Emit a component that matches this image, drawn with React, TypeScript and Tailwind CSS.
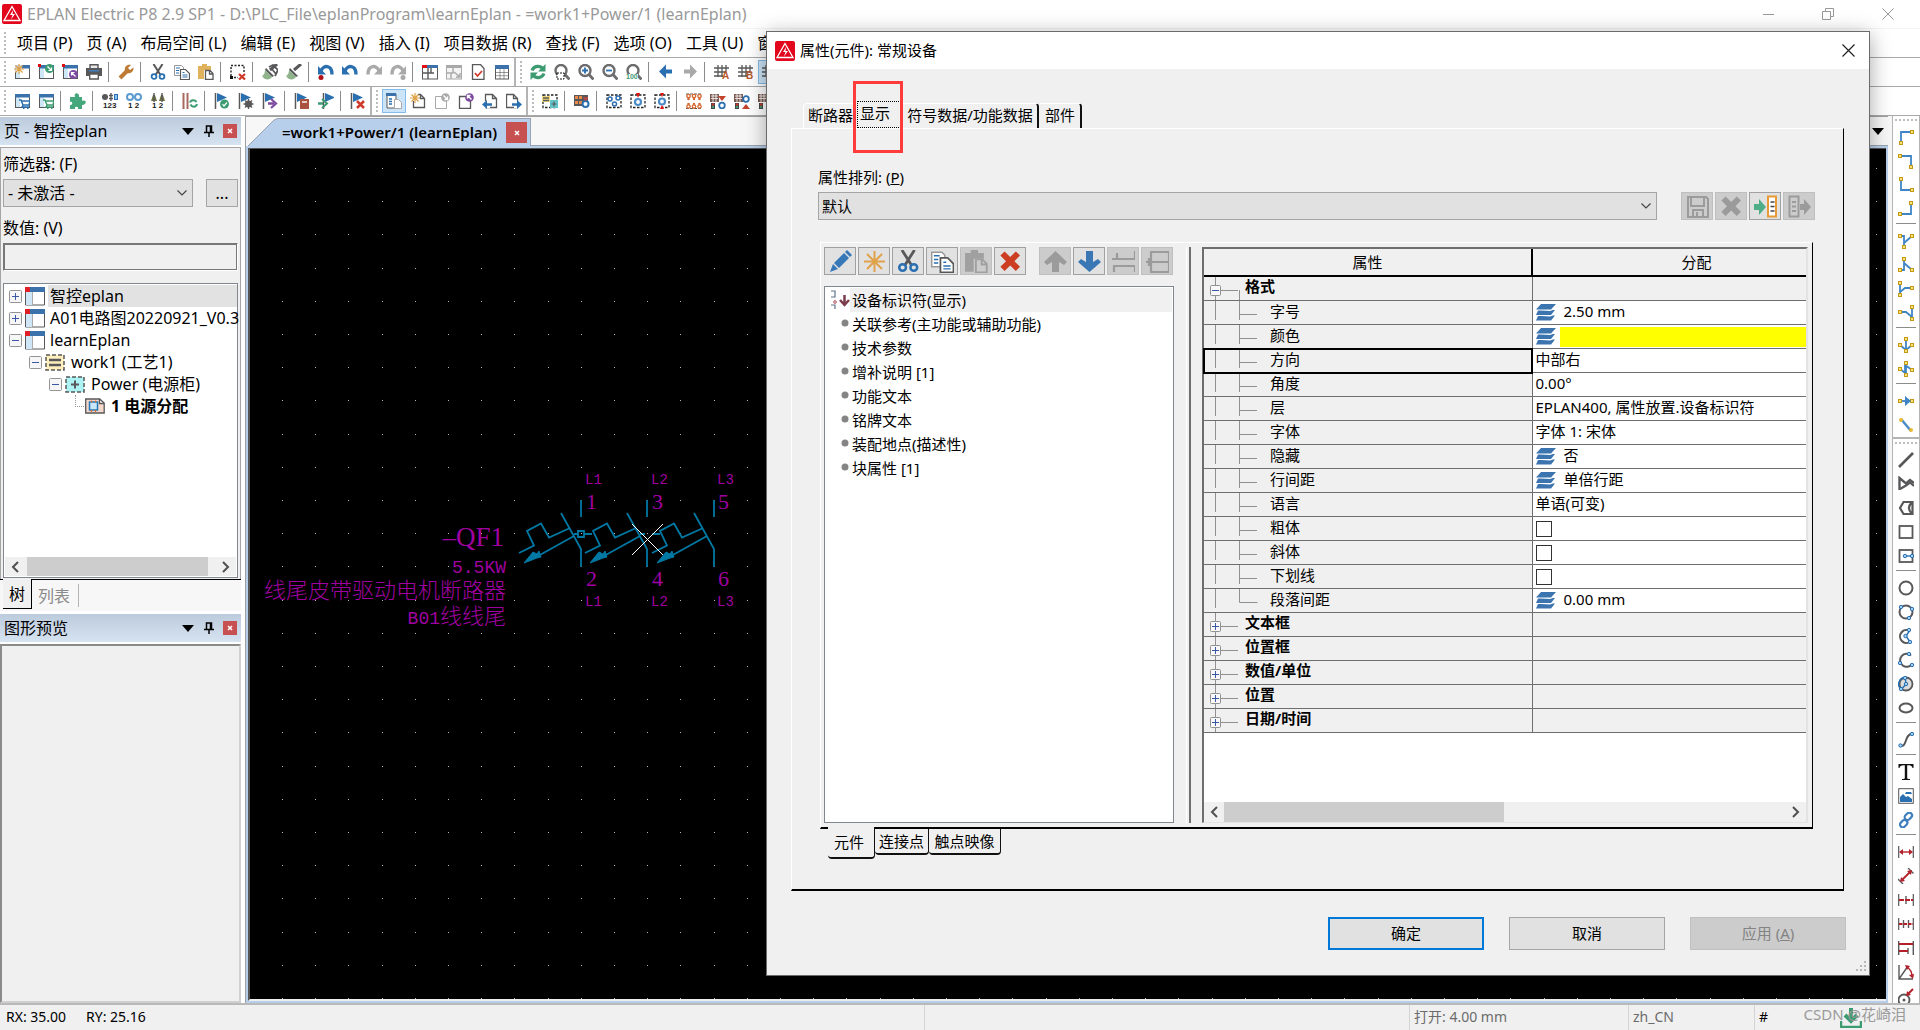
import type { ReactNode } from "react";

const BLUE = "#2a6fb0";
const DARK = "#58585a";
const GREEN = "#3d9b72";
const RED = "#d03a2b";
const PURPLE = "#7c4a9e";
const LITE = "#a9a9a9";

type LineProps = { d: string; c?: string; w?: number; dash?: string };
const L = ({ d, c = DARK, w = 1.4, dash }: LineProps) => (
  <path d={d} fill="none" stroke={c} strokeWidth={w} strokeDasharray={dash} />
);
const F = ({ d, c = DARK }: { d: string; c?: string }) => <path d={d} fill={c} />;
const C = ({ x, y, r, f = "none", s = "none", w = 1.5 }: { x: number; y: number; r: number; f?: string; s?: string; w?: number }) => (
  <circle cx={x} cy={y} r={r} fill={f} stroke={s} strokeWidth={w} />
);
const T = ({ x, y, c, s, children }: { x: number; y: number; c: string; s: number; children: string }) => (
  <text x={x} y={y} fill={c} fontSize={s} fontWeight="700" fontFamily="Liberation Sans, sans-serif">
    {children}
  </text>
);

const win = (
  <>
    <rect x="1.5" y="1.5" width="14" height="13" fill="#fff" stroke={DARK} />
    <path d="M2 4h4v10H2z" fill="#cfe6f7" />
    <path d="M1 1h15v3.5H1z" fill="#3b72ac" />
  </>
);
const redDot = <path d="M0 0h3v3H0z" fill="#e01010" />;
const star = (
  <path d="M5 0v10M0 5h10M1.5 1.5l7 7M8.5 1.5l-7 7" stroke="#dfa044" strokeWidth="1.2" fill="none" />
);
const sheet = <path d="M3.500 1.500h7l4 4v9h-11z M10.500 1.500v4h4" fill="#fff" stroke={DARK} strokeWidth="1.300" />;
const cart = (c: string) => (
  <path d="M5 7h2l2 5h6l1-4H8M9 12l-1 2h7M9 15.500h1.500M13 15.500h1.500" fill="none" stroke={c} strokeWidth="1.500" />
);
const flag = (
  <>
    <path d="M1.500 0v16" stroke={DARK} strokeWidth="1.500" />
    <path d="M3 0l10 4.500L3 9z" fill={BLUE} />
  </>
);
const undo = (c: string) => (
  <>
    <path d="M3 7C5 1 14 0 14 10.500" fill="none" stroke={c} strokeWidth="3.400" />
    <path d="M0 2v8.500h8z" fill={c} />
  </>
);
const redo = (c: string) => <g transform="translate(16 0) scale(-1 1)">{undo(c)}</g>;
const lens = (
  <>
    <circle cx="7" cy="6.500" r="5.500" fill="none" stroke="#6c6c6e" strokeWidth="2.400" />
    <path d="M10.500 10l5 5.500" stroke="#6c6c6e" strokeWidth="2.800" />
  </>
);
const grid = <path d="M4 1v12M8 1v12M12 1v8M0 4h15M0 8h12M0 12h9" stroke={DARK} strokeWidth="1.300" fill="none" />;
const dashBox = <rect x="1" y="2" width="14" height="12.500" fill="none" stroke="#222" strokeWidth="1.300" strokeDasharray="2.500 1.500" />;
const brush = (
  <>
    <path d="M15 0L8 6" stroke={DARK} strokeWidth="3" />
    <path d="M4 4l8 8-2 1-7-7z" fill={DARK} />
    <path d="M3 6l7 7c-2 3-7 4-10-1 2-1 3-3 3-6z" fill="#8fb48c" />
  </>
);
const copyArt = (
  <>
    <path d="M.500 1.500h7l2 2v8h-9z" fill="#fff" stroke="#999" />
    <path d="M6.500 5.500h5l4 4v6h-9z" fill="#fff" stroke={DARK} strokeWidth="1.200" />
    <path d="M2 4h4M2 6.500h3M2 9h3M8.500 8.500h2M8.500 11h5M8.500 13h5" stroke={BLUE} />
  </>
);
const cutArt = (
  <>
    <path d="M3.500 0L10.500 11M12.500 0L5.500 11" stroke={DARK} strokeWidth="2" />
    <circle cx="4" cy="12.500" r="2.400" fill="none" stroke={BLUE} strokeWidth="1.800" />
    <circle cx="12" cy="12.500" r="2.400" fill="none" stroke={BLUE} strokeWidth="1.800" />
  </>
);
const pasteArt = (a: string, b: string, paper: string) => (
  <>
    <path d="M0 2h4V0h5v2h4v4H6v9H0z" fill={a} />
    <path d="M7.500 6.500h4.500l3 3v6h-7.500z M11.500 6.500v3.500h3.500" fill={paper} stroke={b} strokeWidth="1.300" />
  </>
);
const crossArt = (c: string) => (
  <path d="M1 4l3-3 4 4 4-4 3 3-4 4 4 4-3 3-4-4-4 4-3-3 4-4z" fill={c} />
);
const multi = (
  <>
    <path d="M0 1h9v8H0z" fill="#7a5a50" />
    <path d="M1 3h7M1 5.500h7M3 1v8M6 1v8" stroke="#fff" strokeWidth=".8" />
    <path d="M1 10h4v6H1z" fill="#444" />
    <C x={3} y={14} r={1.2} f={GREEN} />
    <C x={3} y={11.500} r={1.200} f={RED} />
  </>
);

const art: Record<string, ReactNode> = {
  newProject: <>{win}<rect width="8" height="8" fill="#fff" opacity=".7" /><g>{star}</g></>,
  openProject: <>{win}{redDot}<C x={11.5} y={4.5} r={4.5} f={GREEN} /><L d="M9.500 2.500l4 4M13.500 3.500v3h-3" c="#fff" w={1.2} /></>,
  closeProject: <>{win}{redDot}<C x={11.5} y={10.5} r={4.5} f={PURPLE} /><L d="M13.500 12.500l-4-4M9.500 11.500v-3h3" c="#fff" w={1.2} /></>,
  print: <><F d="M4 0h8v4H4z" c="#e8e8e8" /><L d="M4 4V.700h8V4" /><F d="M0 4h16v8h-3v-2H3v2H0z" /><F d="M3 6h10v1.500H3z" c="#3f7fbf" /><L d="M3.700 10h8.600v5H3.700z" /></>,
  wrench: <><L d="M2 14l7-7" c="#bd7a35" w={4} /><F d="M7 7c-1-4 2-7 6-6l-3 3 2 2 3.500-2.500C16 8 12 10 8 9z" c="#bd7a35" /></>,
  cut: cutArt,
  copy: copyArt,
  paste: pasteArt("#e0b25c", DARK, "#fff"),
  clear: <><L d="M1 12V1.500h13V9" c="#222" dash="2 1.500" /><F d="M0 12h3v3H0z" c="#111" /><L d="M4 13.500h4" c="#222" dash="2 1.500" /><L d="M9 10l6 5.500M15 10l-6 5.500" c={RED} w={2.2} /></>,
  brush: <>{brush}<L d="M7 3l4-2 5 5-3 6M9 4l5 6" w={1.8} /></>,
  brush2: brush,
  undoMark: <>{undo(BLUE)}<C x={3} y={13.5} r={2.5} f="#b01116" /></>,
  undo: undo(BLUE),
  redo: redo(LITE),
  redoMark: <>{redo(LITE)}<C x={13} y={13.5} r={2.5} f={LITE} /></>,
  windowNav: <><rect x=".5" y="2" width="15" height="13" fill="#fff" stroke={DARK} /><F d="M0 1h5v3H0z" c="#e01010" /><F d="M5 1h11v3H5z" c="#3b72ac" /><L d="M6 4v11M1 9h8V4M9 9h3" /></>,
  windowGray: <><rect x=".5" y="2" width="15" height="13" fill="#f4f4f4" stroke={LITE} /><F d="M0 1h16v3H0z" c={LITE} /><L d="M1 9h6V4M8 8l6 5M14 9v4h-4M5 9v6" c={LITE} /></>,
  sheetCheck: <><path d="M2.500.500h8l3.500 4v11H2.500z" fill="#fff" stroke={DARK} strokeWidth="1.300" /><L d="M5 9l2.500 3L12 7" c={RED} w={1.8} /></>,
  tableIcon: <><rect x="1.500" y="1.500" width="13" height="13.500" fill="#fff" stroke={DARK} /><F d="M1 1h14v4H1z" c="#3b72ac" /><L d="M2 8.500h12M2 11.700h12M6 5v10M10 5v10" w={0.6} /></>,
  refresh: <><L d="M2 6.500C4 1.500 10 1 13 5M14 9.500C12 14.500 6 15 3 11" c={GREEN} w={3.2} /><F d="M15.500 0v7.500H8zM.500 16V8.500H8z" c={GREEN} /></>,
  zoomArea: <>{lens}<rect x="3" y="9" width="7" height="6" fill="#fff" stroke="#111" strokeDasharray="2 1" /></>,
  zoomIn: <>{lens}<L d="M7 3.500v6M4 6.500h6" c={BLUE} w={1.8} /></>,
  zoomOut: <>{lens}<L d="M4 6.500h6" c={BLUE} w={1.8} /></>,
  zoomAll: <>{lens}<rect y="10" width="12" height="6" fill="#fff" /><T x={0} y={15} c={GREEN} s={7}>100</T></>,
  back: <><F d="M1 7.500L8 .500v14z" c={BLUE} /><L d="M6 7.500h8" c={BLUE} w={4} /></>,
  forward: <><F d="M15 7.500L8 .500v14z" c={LITE} /><L d="M2 7.500h8" c={LITE} w={4} /></>,
  gridA: <>{grid}<T x={8} y={15} c="#b8562b" s={10}>A</T></>,
  gridB: <>{grid}<T x={8} y={15} c="#b8562b" s={10}>B</T></>,
  gridC: grid,
  cartBlue: <>{win}{cart(BLUE)}</>,
  cartGreen: <>{win}{cart(GREEN)}</>,
  puzzle: <F d="M0 4h5c-2-5 5-5 4 0h3v4c5-2 5 4 0 4v4H8c1-3-4-3-3 0H0v-4c3 0 3-4 0-3z" c="#45a77c" />,
  num123: <><C x={3} y={4} r={3} f={DARK} /><L d="M0 4h5M7 2.500h4M7 5.500h4M9 0v8" /><rect x="12.500" y="1.500" width="3" height="5" fill="#8ec4ee" stroke={BLUE} /><T x={1} y={15} c="#222" s={8}>123</T></>,
  num12: <><C x={4} y={4} r={3} s="#5b9bd0" w={2} /><C x={12} y={4} r={3} s="#5b9bd0" w={2} /><T x={2} y={15} c="#222" s={8}>1 2</T></>,
  plugs: <><F d="M1 8l2-6h2l2 6zM9 8l2-6h2l2 6z" c="#6d7340" /><L d="M4 0v9M12 0v9" /><T x={2} y={15} c="#222" s={8}>1 2</T></>,
  barsSync: <><L d="M1.500 0v16M5.500 0v16" c="#a86a60" w={2} /><L d="M8 9.500c1-3 5-3 6.500-.5M15 11c-1 3.500-5 3.500-6.500.500" c={GREEN} w={2} /></>,
  flagCheck: <>{flag}<C x={10.5} y={11} r={4.5} f={GREEN} /><L d="M8.500 11l1.500 2 3-3.500" c="#fff" w={1.2} /></>,
  flagGear: <>{flag}<C x={10.5} y={11} r={3.5} f={DARK} /><L d="M10.500 6v10M5.500 11h10M7 7.500l7 7M14 7.500l-7 7" w={1.3} /></>,
  flagNext: <>{flag}<L d="M6 10.500h6" c={PURPLE} w={2.5} /><L d="M9 6l5 4.500L9 15" c={PURPLE} w={2.2} /></>,
  flagBook: <>{flag}<F d="M6 6h9v10H6z" c="#a9523f" /><L d="M8 9h5" c="#fff" /></>,
  flagInto: <><g transform="translate(4 0)">{flag}</g><L d="M0 10.500h5" c={GREEN} w={2.500} /><L d="M4 6l5 4.500L4 15" c={GREEN} w={2} /></>,
  flagDelete: <>{flag}<L d="M7 8l7 7M14 8l-7 7" c={RED} w={2.5} /></>,
  pageView: <><path d="M1 1h9v14H1z" fill="#fff" stroke={DARK} /><F d="M0 0h10v3H0z" c="#3b72ac" /><L d="M3 6h3M3 8.500h3M3 11h3" c={BLUE} /><path d="M8.500 6.500h4l3 3v6h-7z" fill="#fff" stroke={LITE} /></>,
  pageNew: <>{sheet}<rect width="8" height="8" fill="#fff" /><g>{star}</g></>,
  pageOpen: <><path d="M1.500 3.500h7l4 3v9h-11z" fill="#fff" stroke={LITE} /><C x={11.5} y={4.5} r={4.3} f={LITE} /><L d="M9.500 2.500l4 4M13.500 3.500v3h-3" c="#fff" /></>,
  pageClose: <><path d="M1.500 3.500h7l4 3v9h-11z" fill="#fff" stroke={DARK} strokeWidth="1.300" /><C x={11.5} y={4.5} r={4.300} f={PURPLE} /><L d="M13.500 6.500l-4-4M9.500 5.500v-3h3" c="#fff" /></>,
  pageBack: <>{sheet}<path d="M0 8h8v7H0z" fill="#fff" /><F d="M0 11.500L5 7v9z" c={BLUE} /><L d="M4 11.500h6" c={BLUE} w={2.5} /></>,
  pageFwd: <><g transform="translate(-3 0)">{sheet}</g><path d="M8 8h8v7H8z" fill="#fff" /><F d="M16 11.500L11 7v9z" c={BLUE} /><L d="M6 11.500h6" c={BLUE} w={2.5} /></>,
  macro: <>{dashBox}<F d="M0 3h8v6H0z" c="#f5dc7a" /><L d="M1 5h6M1 7.500h6" /><F d="M8 7h8v8H8z" c="#62c4c8" /><L d="M12 8.500v5M9.500 11h5" w={1.2} /></>,
  device: <><F d="M0 2h14v11H0z" c={DARK} /><path d="M1 3h3v3H1zM1 8h3v3H1zM5 3h3v3H5zM5 8h3v3H5z" fill="#e88a4a" /><C x={11.5} y={11} r={3} f="#fff" s={BLUE} w={2} /><F d="M9 4h5v2l-2 2h-1z" c="#b04a4a" /></>,
  dash1: <>{dashBox}<C x={4} y={6} r={2} s={BLUE} /><C x={12} y={5} r={2} s={BLUE} /><C x={8.5} y={11} r={2} s={BLUE} /></>,
  dash2: <>{dashBox}<C x={8} y={9} r={3} s="#4b8cc8" w={2.2} /><F d="M6 0h4l-2 5z" c="#e01010" /></>,
  dash3: <>{dashBox}<C x={8} y={8.5} r={3} s="#4b8cc8" w={2.2} /><F d="M6 0h4l-2 4zM6 16h4l-2-4z" c="#e01010" /></>,
  clamps: (
    <>
      <L d="M0 1h16M0 15.500h16" dash="3 1" w={1} />
      {[2.5, 8, 13.5].map((x) => (
        <g key={x}>
          <L d={`M${x} 3v4M${x} 10v4`} />
          <C x={x} y={3} r={1.700} f="#fff" s="#d8682f" w={1.300} />
          <C x={x} y={6} r={1.200} f="#d8682f" />
          <C x={x} y={11} r={1.200} f="#d8682f" />
          <C x={x} y={13.500} r={1.700} f="#fff" s="#d8682f" w={1.300} />
        </g>
      ))}
    </>
  ),
  multi1: <>{multi}<F d="M8 3h8l-4 5z" c="#c3432d" /><C x={12} y={12.500} r={2.800} s={BLUE} w={1.800} /></>,
  multi2: <>{multi}<F d="M8 16h8l-4-5z" c="#c3432d" /><C x={12} y={6} r={2.800} s={BLUE} w={1.800} /></>,
  multi3: multi,
};

const node = (pts: number[][]) => (
  <>
    {pts.map(([x, y]) => (
      <rect key={x + "-" + y} x={x - 1.5} y={y - 1.500} width="3" height="3" fill="#ffe27a" stroke="#c39a17" />
    ))}
  </>
);
const wire = (d: string, pts: number[][]) => (
  <>
    <path d={d} fill="none" stroke="#3f85c6" strokeWidth="1.800" />
    {node(pts)}
  </>
);
const bd = (pts: number[][]) => (
  <>
    {pts.map(([x, y]) => (
      <circle key={x + "-" + y} cx={x} cy={y} r="1.700" fill="#9fd0f5" stroke={BLUE} />
    ))}
  </>
);
const dimEnds = <path d="M.700 2v12M15.300 2v12" stroke={DARK} strokeWidth="1.200" />;

Object.assign(art, {
  w1: wire("M3 14V3h11", [[3, 14], [14, 3]]),
  w2: wire("M2 3h11v11", [[2, 3], [13, 14]]),
  w3: wire("M3 2v11h11", [[3, 2], [14, 13]]),
  w4: wire("M2 13h11V2", [[2, 13], [13, 2]]),
  w5: wire("M2 3h4v11M14 3l-8 7", [[2, 3], [14, 3], [6, 14]]),
  w6: wire("M2 13h4V2M14 13L6 6", [[2, 13], [14, 13], [6, 2]]),
  w7: wire("M2 2v12M2 11l5-4h7", [[2, 2], [2, 14], [14, 7]]),
  w8: wire("M14 2v12M14 12L8 7H2", [[14, 2], [14, 14], [2, 7]]),
  w9: wire("M8 2v11M2 8l6 5 6-5", [[2, 8], [8, 2], [14, 8], [8, 14]]),
  w10: wire("M2 8l5 4V4l7 5M8 14V2", [[2, 8], [8, 2], [14, 9], [8, 14]]),
  w11: <>{wire("M2 8h12", [[2, 8], [14, 8]])}<path d="M7 3l6 5-6 5z" fill="#3f85c6" /></>,
  w12: <><L d="M3 2l10 12" c="#4b8cc8" w={2.500} /><C x={3} y={3} r={2} f="#e7b934" /><C x={13} y={13} r={2} f="#e7b934" /></>,
  line: <L d="M1 15L15 1" w={2.6} />,
  poly: <><L d="M1.500 14V2L8 7.500l4-3.500 4 3" w={2.400} /><L d="M2 13l6-3.500 4-3 4 3.500" w={2.200} /></>,
  polygon: <L d="M5.500 2h9v12h-9L2 8z M14 2c-4 4-4 8 0 12" w={2.200} />,
  rectI: <rect x="1.500" y="2" width="13" height="12" fill="none" stroke={DARK} strokeWidth="1.800" />,
  rectC: <><rect x="1.500" y="2" width="13" height="12" fill="none" stroke={DARK} strokeWidth="1.800" /><L d="M7 8h7" c={BLUE} />{bd([[7, 8], [14, 8]])}</>,
  circle: <C x={8} y={8} r={6.5} s={DARK} w={2} />,
  circle3: <><C x={8} y={8} r={6.5} s={DARK} w={2} />{bd([[3, 3], [14, 5], [11, 14]])}</>,
  arc1: <><L d="M12 3A6.500 6.500 0 1 0 12 14" w={2} /><L d="M12 2L8 8l4 6" c={BLUE} />{bd([[11, 2], [7.500, 8], [12, 14]])}</>,
  arc2: <><L d="M13 3.500A6.500 6.500 0 1 0 14 12" w={2} />{bd([[11, 2], [2, 11], [14, 13]])}</>,
  sector: <><C x={8} y={8} r={6.500} f="#ddd" s={DARK} w={1.800} /><L d="M8 8L7 1M8 8l-5 6M7 1.500A6.500 6.500 0 0 0 3 13" c={BLUE} />{bd([[7, 2], [8, 8], [3, 13]])}</>,
  ellipse: <ellipse cx="8" cy="8" rx="6.500" ry="4.500" fill="none" stroke={DARK} strokeWidth="2" />,
  spline: <><L d="M2 14c8 1 4-12 12-12" w={2} />{bd([[2.500, 13.500], [14, 2]])}</>,
  text: <path d="M.500 0h15v4h-1C14 2 13 1.200 9.200 1.200V14c0 .8.800 1 2.800 1v1H4v-1c2 0 2.800-.2 2.800-1V1.200C3 1.200 2 2 1.500 4h-1z" fill="#111" />,
  image: <><rect x=".7" y=".7" width="14.600" height="14.600" fill="#fff" stroke={DARK} /><F d="M2 14V9l3-3 3 3 2-1 4 3v3zM8 4h5l1 2H7z" c={BLUE} /></>,
  link: <g fill="none" stroke="#3f7fbd" strokeWidth="2.200"><rect x="6.500" y="1.500" width="8" height="5.500" rx="2.700" transform="rotate(-45 10.500 4.500)" /><rect x="1.500" y="9" width="8" height="5.500" rx="2.700" transform="rotate(-45 5.500 11.500)" /></g>,
  dim1: <>{dimEnds}<L d="M3 8h10" c="#b3202a" /><F d="M1 8l4-3v6zM15 8l-4-3v6z" c="#b3202a" /></>,
  dim2: <><L d="M0 11l5 5M10 0l5.500 5.500" /><L d="M4 12l8-8" c="#b3202a" w={1.800} /><F d="M2 14l1-5 4 4zM14 2l-5 1 4 4z" c="#b3202a" /></>,
  dim3: <>{dimEnds}<L d="M8 4v8" /><L d="M1 8h14" c="#b3202a" w={2} dash="5 1" /></>,
  dim4: <>{dimEnds}<L d="M5.500 4v8M10.500 4v8" /><L d="M1 8h14" c="#b3202a" w={2} dash="3.500 1" /></>,
  dim5: <><L d="M.700 1v14M15.300 1v14M10 8v6" /><L d="M1 4h14M1 11h9" c="#b3202a" w={2} /></>,
  angle: <><L d="M1 1v14h14M1 15L10 2" /><L d="M9 3c3 2 5 5 5 9" c="#b3202a" /><F d="M7 1l5 1-3 4zM11 11l5-1-1 5z" c="#b3202a" /></>,
  radius: <><C x={6} y={12} r={5.500} s={DARK} w={1.800} /><C x={6} y={12} r={1.500} f={DARK} /><L d="M15 1l-5 5" c="#b3202a" w={2} /><F d="M8 8l1-5 4 4z" c="#b3202a" /></>,
});

const Icon = ({ name }: { name: string }) => (
  <svg width="16" height="16" viewBox="0 0 16 16" className="shrink-0" aria-hidden="true">
    {art[name]}
  </svg>
);

const rowOne = [
  "newProject openProject closeProject print|wrench|cut copy paste|clear|brush brush2|undoMark undo redo redoMark|windowNav windowGray sheetCheck tableIcon",
  "refresh zoomArea zoomIn zoomOut zoomAll|back forward|gridA gridB *gridC",
];
const rowTwo = [
  "cartBlue cartGreen|puzzle|num123 num12 plugs|barsSync|flagCheck flagGear flagNext|flagBook flagInto|flagDelete",
  "*pageView pageNew pageOpen pageClose pageBack pageFwd",
  "macro|device|dash1 dash2 dash3|clamps multi1 multi2 multi3",
];
const sideBars = [
  "w1 w2 w3 w4|w5 w6 w7 w8|w9 w10|w11 w12",
  "line poly polygon rectI rectC|circle circle3 arc1 arc2 sector ellipse|spline|text image link|dim1 dim2 dim3 dim4 dim5 angle radius",
];

const ToolButton = ({ spec }: { spec: string }) => {
  const on = spec.startsWith("*");
  const name = on ? spec.slice(1) : spec;
  return (
    <button
      type="button"
      aria-label={name}
      className={"flex size-6 shrink-0 items-center justify-center " + (on ? "border border-[#84bbe8] bg-[#cce4f7]" : "")}
    >
      <Icon name={name} />
    </button>
  );
};

const Bars = ({ groups }: { groups: string[] }) => (
  <div className="flex h-[29px] shrink-0 border-b border-[#a8a8a8] bg-white">
    {groups.map((g, gi) => (
      <div key={g} className={"flex items-center " + (gi < groups.length - 1 ? "border-r-2 border-[#b4b4b4]" : "")}>
        <div className="mx-1 h-[22px] border-l-2 border-dotted border-[#bdbdbd]" />
        {g.split("|").map((part, pi) => (
          <div key={part} className="flex items-center">
            {pi > 0 && <div className="ml-0.5 mr-[5px] h-5 w-px bg-[#8c8c8c]" />}
            {part.split(" ").map((s) => (
              <ToolButton key={s} spec={s} />
            ))}
          </div>
        ))}
      </div>
    ))}
  </div>
);

const SideBars = () => (
  <div className="ml-1 flex w-7 shrink-0 flex-col overflow-hidden border-x border-[#b4b4b4] bg-white">
    {sideBars.map((g, gi) => (
      <div key={g} className={"flex flex-col items-center " + (gi === 0 ? "border-b-2 border-[#b4b4b4]" : "")}>
        <div className="mb-1 mt-[3px] w-[22px] border-t-2 border-dotted border-[#bdbdbd]" />
        {g.split("|").map((part, pi) => (
          <div key={part} className="flex flex-col items-center">
            {pi > 0 && <div className="mb-[5px] mt-0.5 h-px w-5 bg-[#8c8c8c]" />}
            {part.split(" ").map((s) => (
              <ToolButton key={s} spec={s} />
            ))}
          </div>
        ))}
      </div>
    ))}
  </div>
);

const Logo = () => (
  <svg width="20" height="20" viewBox="0 0 20 20" className="shrink-0" aria-hidden="true">
    <rect width="20" height="20" rx="2" fill="#e2071c" />
    <path d="M10 2.500L18 16.500H2z" fill="none" stroke="#fff" strokeWidth="1.300" />
    <path d="M11 6l-3 5h2.500l-1.500 4.500L13 10h-2.500z" fill="#fff" />
  </svg>
);

const menus = ["项目 (P)", "页 (A)", "布局空间 (L)", "编辑 (E)", "视图 (V)", "插入 (I)", "项目数据 (R)", "查找 (F)", "选项 (O)", "工具 (U)", "窗口 (W)"];

const PanelHeader = ({ title }: { title: string }) => (
  <div className="flex h-7 shrink-0 items-center bg-gradient-to-b from-[#bccbdc] to-[#d6e3f1] pl-1 pr-1">
    <h2 className="flex-1 text-base">{title}</h2>
    <button type="button" aria-label="菜单" className="mr-2.5">
      <svg width="12" height="7" viewBox="0 0 12 7"><path d="M0 0h12L6 7z" fill="#000" /></svg>
    </button>
    <button type="button" aria-label="固定" className="mr-[9px]">
      <svg width="10" height="12" viewBox="0 0 10 12" fill="none" stroke="#000" strokeWidth="1.500">
        <path d="M2.500 7V1h5v6M6.500 1v6M0 7.500h10M5 8v4" />
      </svg>
    </button>
    <button type="button" aria-label="关闭" className="flex size-3.5 items-center justify-center bg-[#c75050]">
      <svg width="6" height="6" viewBox="0 0 6 6"><path d="M1 1l4 4M5 1L1 5" stroke="#fff" strokeWidth="1.500" /></svg>
    </button>
  </div>
);

const Expander = ({ open }: { open: boolean }) => (
  <svg width="13" height="13" viewBox="0 0 13 13" className="shrink-0" aria-hidden="true">
    <rect x=".5" y=".5" width="12" height="12" rx="1" fill="#f6f6f6" stroke="#949494" />
    <path d={open ? "M3 6.500h7" : "M3 6.500h7M6.500 3v7"} stroke="#3a57a8" />
  </svg>
);
const ProjectIcon = () => (
  <svg width="20" height="19" viewBox="0 0 20 19" className="shrink-0" aria-hidden="true">
    <path d="M.500 1h19v17H.500z" fill="#fff" stroke={DARK} />
    <path d="M1 5h6v13H1z" fill="#cfe6f7" />
    <path d="M7.500 5v13" stroke="#aaa" />
    <path d="M0 0h20v5H0z" fill="#3b72ac" />
    <path d="M0 0h5v5H0z" fill="#e01f26" />
  </svg>
);
const PlantIcon = () => (
  <svg width="20" height="17" viewBox="0 0 20 17" className="shrink-0" aria-hidden="true">
    <rect x="1" y="1" width="18" height="15" fill="#ffefbd" stroke={DARK} strokeWidth="1.500" strokeDasharray="4 2" />
    <path d="M4 6h12M4 11h12" stroke={DARK} strokeWidth="2.500" />
  </svg>
);
const PlaceIcon = () => (
  <svg width="20" height="17" viewBox="0 0 20 17" className="shrink-0" aria-hidden="true">
    <rect x="1" y="1" width="18" height="15" fill="#aef3f3" stroke={DARK} strokeWidth="1.500" strokeDasharray="4 2" />
    <path d="M6 8.500h8M10 4.500v8" stroke={DARK} strokeWidth="2" />
  </svg>
);
const PageIcon = () => (
  <svg width="20" height="16" viewBox="0 0 20 16" className="shrink-0" aria-hidden="true">
    <path d="M.700 1h14l4.500 4v10H.700z M14.500 1v4.500h5" fill="#f5d8cc" stroke={DARK} strokeWidth="1.300" />
    <rect x="4.500" y="4" width="8" height="8" fill="#c9e6fa" stroke="#2679b8" strokeWidth="1.500" />
    <path d="M6.500 2.500v2M10.500 2.500v2M6.500 12v2M10.500 12v2" stroke="#e07030" strokeWidth="1.200" />
  </svg>
);

const Chevron = ({ dir }: { dir: "left" | "right" }) => (
  <svg width="8" height="12" viewBox="0 0 8 12" fill="none" stroke="#505050" strokeWidth="2" aria-hidden="true">
    <path d={dir === "left" ? "M7 1L2 6l5 5" : "M1 1l5 5-5 5"} />
  </svg>
);
const Down = () => (
  <svg width="10" height="6" viewBox="0 0 10 6" fill="none" stroke="#444" strokeWidth="1.200" className="pointer-events-none absolute right-1.5 top-1/2 -translate-y-1/2" aria-hidden="true">
    <path d="M.500.500L5 5l4.500-4.500" />
  </svg>
);

const PagesPanel = () => (
  <section>
    <PanelHeader title="页 - 智控eplan" />
    <div className="mt-0.5 flex flex-col border-x border-t border-[#a5a5a5] bg-[#f0f0f0] px-0.5 pb-px">
      <label htmlFor="filter" className="mt-1 text-base leading-6">筛选器: (F)</label>
      <div className="mt-[3px] flex items-center justify-between">
        <div className="relative w-[190px]">
          <select id="filter" className="h-7 w-full appearance-none border border-[#a5a5a5] bg-[#e1e1e1] px-1 text-base leading-6">
            <option>- 未激活 -</option>
          </select>
          <Down />
        </div>
        <button type="button" aria-label="筛选器选项" className="h-7 w-8 border border-[#a5a5a5] bg-[#e1e1e1] text-base leading-6">...</button>
      </div>
      <label htmlFor="value" className="mt-[9px] text-base leading-6">数值: (V)</label>
      <input id="value" className="mt-[3px] h-7 w-full border-2 border-[#777] border-b-white border-r-white bg-[#f0f0f0] outline outline-1 -outline-offset-2 outline-[#777]" />
      <div className="mt-3 flex h-[295px] flex-col border border-[#82878f] bg-white">
        <ul className="flex-1 pl-1 pt-px text-base leading-[22px]">
          {["智控eplan", "A01电路图20220921_V0.3", "learnEplan"].map((t, i) => (
            <li key={t} className="flex h-[22px] items-center whitespace-nowrap pl-px">
              <Expander open={i === 2} />
              <div className="ml-[3px] flex"><ProjectIcon /></div>
              <span className={"ml-[3px] flex-1 pl-0.5 " + (i === 0 ? "bg-[#e2e2e2]" : "")}>{t}</span>
            </li>
          ))}
          <li className="flex h-[22px] items-center pl-[21px]"><Expander open /><div className="ml-[3px] flex"><PlantIcon /></div><span className="ml-1.5">work1 (工艺1)</span></li>
          <li className="flex h-[22px] items-center pl-[41px]"><Expander open /><div className="ml-[3px] flex"><PlaceIcon /></div><span className="ml-1.5">Power (电源柜)</span></li>
          <li className="flex h-[22px] items-center pl-[67px]">
            <div className="h-3 w-[9px] self-start border-b border-l border-dotted border-[#999]" />
            <div className="ml-px flex"><PageIcon /></div>
            <span className="ml-1.5 font-bold">1 电源分配</span>
          </li>
        </ul>
        <div className="m-px flex h-[19px] items-center justify-between bg-[#f0f0f0] px-1.5">
          <Chevron dir="left" />
          <div className="ml-2 mr-3.5 h-full flex-1 bg-[#cdcdcd]" />
          <Chevron dir="right" />
        </div>
      </div>
    </div>
    <div className="flex h-8 border-t border-black bg-[#f7f7f7] pl-[3px] text-base" role="tablist">
      <button type="button" role="tab" aria-selected="true" className="-mt-px h-[30px] w-[29px] border-b border-r border-black bg-[#f0f0f0]">树</button>
      <button type="button" role="tab" aria-selected="false" className="my-1 border-r border-[#b4b4b4] pl-1.5 pr-2 leading-5 text-[#8a8a8a]">列表</button>
    </div>
  </section>
);

const MAG = "#a000a0";
const cols = Array.from({ length: 60 }, (_, i) => Math.round(282 + i * 33.2));
const rows = Array.from({ length: 26 }, (_, i) => Math.round(168 + i * 33.2));

const Pole = ({ x }: { x: number }) => (
  <g transform={`translate(${x} 0)`} fill="none" stroke="#0078a4" strokeWidth="1.800">
    <path d="M0 500v17M-20 513L0 549v18M-62 553l15-7.500-7-14.500 14-7.500 8 14 20-9M-7 536l-36 20" />
    <path d="M-57 563l9-11 4 2 2-3 2 6-4 1z" fill="#0078a4" strokeWidth="1" />
  </g>
);

const Schematic = () => (
  <svg className="block size-full" aria-label="QF1">
    <g transform="translate(-250 -149)">
      <g fill="#b8b8b8">
        {rows.map((y) => cols.map((x) => <rect key={x + "-" + y} x={x} y={y} width="1" height="1" />))}
      </g>
      <Pole x={581} />
      <Pole x={647} />
      <Pole x={714} />
      <path d="M574 534h4M584 534h8M640 534h5M652 534h8M578 531h6v6h-6z" fill="none" stroke="#0078a4" strokeWidth="1.800" />
      <path d="M632 524l31 31M663 524l-31 31" stroke="#fff" />
      <g fill={MAG} className="font-light" fontFamily="Liberation Mono, Noto Sans CJK SC, monospace">
        <g fontSize="14">
          <text x="585" y="484">L1</text><text x="651" y="484">L2</text><text x="717" y="484">L3</text>
          <text x="585" y="606">L1</text><text x="651" y="606">L2</text><text x="717" y="606">L3</text>
        </g>
        <g fontSize="22" fontFamily="Liberation Serif, serif">
          <text x="586" y="509">1</text><text x="652" y="509">3</text><text x="718" y="509">5</text>
          <text x="586" y="586">2</text><text x="652" y="586">4</text><text x="718" y="586">6</text>
        </g>
        <g textAnchor="end">
          <text x="504" y="546" fontSize="27" fontFamily="Liberation Serif, serif">–QF1</text>
          <text x="506" y="573" fontSize="18">5.5KW</text>
          <text x="506" y="598" fontSize="22">线尾皮带驱动电机断路器</text>
          <text x="506" y="624" fontSize="22"><tspan fontSize="18">B01</tspan>线线尾</text>
        </g>
      </g>
    </g>
  </svg>
);

const dlgArt: Record<string, ReactNode> = {
  edit: <><path d="M5 13L15 3l5 5-10 10z" fill="#3778b8" /><path d="M16 2l2-2 5 5-2 2z" fill="#3778b8" /><path d="M4 14l5 5-8 3z" fill="#3778b8" /></>,
  create: <path d="M11.500 1v21M1 11.500h21M4 4l15 15M19 4L4 19" stroke="#e0a24a" strokeWidth="2" />,
  cut: <g transform="scale(1.400)">{cutArt}</g>,
  copy: <g transform="scale(1.450)">{copyArt}</g>,
  paste: <g transform="scale(1.450)">{pasteArt("#a0a0a0", "#a0a0a0", "#ccc")}</g>,
  remove: <g transform="scale(1.400)">{crossArt("#cc3d22")}</g>,
  up: <path d="M11.500 1L23 12l-3 3-5-3v10H8V12l-5 3-3-3z" fill="#9b9b9b" />,
  down: <path d="M11.500 22L23 12l-3-3-5 3V1H8v11L3 9l-3 3z" fill="#3b76b5" />,
  insert: <path d="M0 9h5V3M0 9h23V1M2 22v-6h21v6" fill="none" stroke="#9b9b9b" strokeWidth="2.200" />,
  merge: <path d="M5 2h18v20H5zM0 12h23M3 8v8" fill="none" stroke="#9b9b9b" strokeWidth="2.200" />,
  save: <path d="M2 2h18l2 2v18H2zM5 2v9h13V2M7 22v-7h10v7M11 17v5" fill="none" stroke="#9b9b9b" strokeWidth="2" />,
  del: <g transform="scale(1.400)">{crossArt("#9b9b9b")}</g>,
  imp: <><path d="M0 9h5V4l7 8-7 8v-5H0z" fill="#4fae87" /><path d="M14 1.500h8v20h-8z" fill="#fff" stroke="#e89b35" strokeWidth="2" /><path d="M16.500 7h4M16.500 11.500h4M16.500 16h4" stroke="#444" strokeWidth="1.500" /></>,
  exp: <><path d="M1.500 1.500h9v20h-9zM4 7h4M4 11.500h4M4 16h4" fill="none" stroke="#9b9b9b" strokeWidth="2" /><path d="M12 9h4V4l7 8-7 8v-5h-4z" fill="#9b9b9b" /></>,
};
const DlgButton = ({ name, off }: { name: string; off?: boolean }) => (
  <button
    type="button"
    aria-label={name}
    disabled={off}
    className={"flex h-7 w-8 items-center justify-center border " + (off ? "border-[#bfbfbf] bg-[#cccccc]" : "border-[#a0a0a0] bg-[#e1e1e1]")}
  >
    <svg width="23" height="23" viewBox="0 0 23 23" aria-hidden="true">{dlgArt[name]}</svg>
  </button>
);

const placements = ["设备标识符(显示)", "关联参考(主功能或辅助功能)", "技术参数", "增补说明 [1]", "功能文本", "铭牌文本", "装配地点(描述性)", "块属性 [1]"];

type Row = { n: string; v?: string; layer?: boolean; kind?: "group" | "check" | "color" };
const props: Row[] = [
  { n: "格式", kind: "group" },
  { n: "字号", v: "2.50 mm", layer: true },
  { n: "颜色", layer: true, kind: "color" },
  { n: "方向", v: "中部右" },
  { n: "角度", v: "0.00°" },
  { n: "层", v: "EPLAN400, 属性放置.设备标识符" },
  { n: "字体", v: "字体 1: 宋体" },
  { n: "隐藏", v: "否", layer: true },
  { n: "行间距", v: "单倍行距", layer: true },
  { n: "语言", v: "单语(可变)" },
  { n: "粗体", kind: "check" },
  { n: "斜体", kind: "check" },
  { n: "下划线", kind: "check" },
  { n: "段落间距", v: "0.00 mm", layer: true },
  { n: "文本框", kind: "group" },
  { n: "位置框", kind: "group" },
  { n: "数值/单位", kind: "group" },
  { n: "位置", kind: "group" },
  { n: "日期/时间", kind: "group" },
];

const Layers = () => (
  <svg width="20" height="17" viewBox="0 0 20 17" className="shrink-0" fill="#3b74af" aria-hidden="true">
    <path d="M5 0h15l-5 5.500H0zM2 6.500h3l9 .5 3-1h2l-4 5H0zM2 12h3l9 .5 3-1h2l-4 5H0z" />
  </svg>
);

const Branch = ({ row, last }: { row: Row; last: boolean }) => {
  if (row.kind === "group") {
    const open = row.n === "格式";
    return (
      <svg width="41" height="23" viewBox="0 0 41 23" className="shrink-0" aria-hidden="true">
        <path d="M11.500 0v23M16 13.500h18" stroke="#909090" fill="none" />
        {open && <path d="M35.500 13v10" stroke="#909090" />}
        <rect x="6.500" y="8.500" width="10" height="10" rx="1" fill="#f8f8f8" stroke="#909090" />
        <path d={open ? "M8 13.500h7" : "M8 13.500h7M11.500 10v7"} stroke="#3a57a8" />
      </svg>
    );
  }
  return (
    <svg width="66" height="23" viewBox="0 0 66 23" className="shrink-0" aria-hidden="true">
      <path d={last ? "M11.500 0v19M35.500 0v13.500h18" : "M11.500 0v19M35.500 0v19M36 13.500h17"} stroke="#909090" fill="none" />
    </svg>
  );
};

const PropertyTable = () => (
  <div className="ml-[11px] flex min-w-0 flex-1 flex-col border-2 border-b border-[#6e6e6e] border-b-[#e3e3e3] border-r-[#e3e3e3] bg-white">
    <table className="w-full table-fixed border-collapse">
      <thead>
        <tr className="h-[27px] border-b-2 border-black bg-[#f0f0f0]">
          <th className="w-[328px] border-r-2 border-black p-0 font-normal leading-6">属性</th>
          <th className="p-0 pl-[54px] font-normal leading-6">分配</th>
        </tr>
      </thead>
      <tbody>
        {props.map((r) => {
          const group = r.kind === "group";
          return (
            <tr key={r.n} className="h-6 border-b border-[#6e6e6e] leading-5">
              <th scope="row" className={"border-r border-[#6e6e6e] bg-[#f0f0f0] p-0 text-left " + (group ? "font-bold" : "font-normal") + (r.n === "方向" ? " outline outline-2 -outline-offset-1 outline-black" : "")}>
                <div className="flex h-[23px] items-center">
                  <Branch row={r} last={r.n === "段落间距"} />
                  <span className={group ? "pb-1.5" : "pb-[3px]"}>{r.n}</span>
                </div>
              </th>
              <td className={"p-0 " + (group ? "bg-[#f0f0f0]" : "bg-white")}>
                <div className="flex h-[23px] items-center pl-[3px]">
                  {r.layer && <Layers />}
                  {r.kind === "color" && <div className="ml-1 h-5 flex-1 bg-[#ffff00]" />}
                  {r.kind === "check" && <input type="checkbox" aria-label={r.n} className="size-4 appearance-none border border-[#333] bg-white" />}
                  {r.v && <span className={"whitespace-nowrap pb-[3px] " + (r.layer ? "ml-2" : "")}>{r.v}</span>}
                </div>
              </td>
            </tr>
          );
        })}
      </tbody>
    </table>
    <div className="mt-auto flex h-5 items-center bg-[#f0f0f0] px-1.5">
      <Chevron dir="left" />
      <div className="ml-1.5 h-full w-[280px] bg-[#cdcdcd]" />
      <div className="ml-auto flex"><Chevron dir="right" /></div>
    </div>
  </div>
);

const Dialog = () => (
  <div role="dialog" aria-label="属性(元件): 常规设备" className="absolute bottom-[54px] left-[766px] right-[50px] top-[31px] flex flex-col border border-[#6b6b6b] bg-[#f0f0f0] text-[15px] shadow-[0_4px_20px_rgba(0,0,0,0.35)]">
    <div className="flex h-[37px] shrink-0 items-center bg-white pl-2 pr-2.5">
      <Logo />
      <h1 className="ml-[5px] flex-1">属性(元件): 常规设备</h1>
      <button type="button" aria-label="关闭" className="p-1">
        <svg width="13" height="13" viewBox="0 0 13 13" stroke="#222" strokeWidth="1.200"><path d="M.500.500l12 12M12.500.500l-12 12" /></svg>
      </button>
    </div>
    <div className="flex min-h-0 flex-1 flex-col pl-6 pr-[25px] pt-8">
      <div className="flex h-[27px] items-end pl-3" role="tablist">
        <button type="button" role="tab" aria-selected="false" className="h-[25px] w-[54px] rounded-tl border-l border-t border-white pb-0.5 text-center leading-5">断路器</button>
        <div className="relative">
          <button type="button" role="tab" aria-selected="true" className="h-[27px] w-[46px] border border-dotted border-black pb-1 pr-2.5 leading-5">显示</button>
          <div className="pointer-events-none absolute -left-1 -top-5 h-[72px] w-[50px] border-[3px] border-[#ff3b3b]" />
        </div>
        <button type="button" role="tab" aria-selected="false" className="h-[25px] w-[136px] rounded-tr border-r-2 border-t border-r-[#111] border-t-white pb-0.5 leading-5">符号数据/功能数据</button>
        <button type="button" role="tab" aria-selected="false" className="ml-px h-[25px] w-[42px] rounded-tr border-r-2 border-t border-r-[#111] border-t-white pb-0.5 leading-5">部件</button>
      </div>
      <div className="flex min-h-0 flex-1 flex-col border border-b-2 border-black border-l-white border-t-white pb-[30px] pl-[26px] pr-7 pt-[35px]">
        <label htmlFor="arrangement" className="mb-0.5 leading-[26px]">属性排列: (<u>P</u>)</label>
        <div className="flex items-center">
          <div className="relative flex-1">
            <select id="arrangement" className="h-7 w-full appearance-none border border-[#a5a5a5] bg-[#e1e1e1] px-[3px] leading-6">
              <option>默认</option>
            </select>
            <Down />
          </div>
          <div className="ml-6 flex gap-0.5">
            <DlgButton name="save" off />
            <DlgButton name="del" off />
            <DlgButton name="imp" />
            <DlgButton name="exp" off />
          </div>
        </div>
        <div className="ml-0.5 mr-0.5 mt-[22px] flex min-h-0 flex-1 border border-b-2 border-black border-l-white border-t-white py-1 pl-[3px] pr-1">
          <div className="flex w-[350px] flex-col">
            <div className="flex gap-0.5">
              <DlgButton name="edit" />
              <DlgButton name="create" />
              <DlgButton name="cut" />
              <DlgButton name="copy" />
              <DlgButton name="paste" off />
              <DlgButton name="remove" />
              <div className="ml-[11px] flex gap-0.5">
                <DlgButton name="up" off />
                <DlgButton name="down" />
                <DlgButton name="insert" off />
                <DlgButton name="merge" off />
              </div>
            </div>
            <ul className="mt-[11px] flex-1 border border-[#82878f] bg-white p-px leading-6">
              {placements.map((p, i) => (
                <li key={p} className="flex h-6 items-center pl-1">
                  <svg width="20" height="20" viewBox="0 0 20 20" className="shrink-0" aria-hidden="true">
                    {i === 0 ? (
                      <>
                        <path d="M1 1h4v6H1M1 15h4v4" fill="none" stroke="#5f7385" strokeWidth="1.200" />
                        <circle cx="5" cy="12" r="1.300" fill="#fff" stroke="#b04a5a" />
                        <path d="M14.500 5v8M10 10l4.500 5 4.500-5" fill="none" stroke="#7b3d4c" strokeWidth="2.500" />
                      </>
                    ) : (
                      <circle cx="15" cy="9" r="3.500" fill="#858585" />
                    )}
                  </svg>
                  <span className={"flex-1 pl-0.5 " + (i === 0 ? "bg-[#f0f0f0]" : "")}>{p}</span>
                </li>
              ))}
            </ul>
          </div>
          <div className="ml-3 w-[5px] border-l border-r-2 border-l-white border-r-[#707070]" />
          <PropertyTable />
        </div>
        <div className="ml-2.5 flex items-start" role="tablist">
          <button type="button" role="tab" aria-selected="true" className="-mt-0.5 h-8 w-[47px] rounded-b-sm border-b-2 border-r border-[#111] bg-[#f0f0f0] pr-1">元件</button>
          <button type="button" role="tab" aria-selected="false" className="h-[26px] w-[54px] rounded-b-sm border-b-2 border-r border-[#111]">连接点</button>
          <button type="button" role="tab" aria-selected="false" className="h-[26px] w-[72px] rounded-b-sm border-b-2 border-r border-[#111]">触点映像</button>
        </div>
      </div>
    </div>
    <div className="relative flex shrink-0 justify-end gap-[25px] pb-[25px] pr-[23px] pt-[26px]">
      <button type="button" className="h-[33px] w-[156px] border-2 border-[#0078d7] bg-[#e1e1e1]">确定</button>
      <button type="button" className="h-[33px] w-[156px] border border-[#a5a5a5] bg-[#e1e1e1]">取消</button>
      <button type="button" disabled className="h-[33px] w-[156px] border border-[#bfbfbf] bg-[#cccccc] text-[#838383]">应用 (<u>A</u>)</button>
      <svg width="12" height="12" viewBox="0 0 12 12" className="absolute bottom-0.5 right-0.5" fill="#b8b8b8" aria-hidden="true">
        <path d="M9 0h2v2H9zM9 4h2v2H9zM9 8h2v2H9zM5 4h2v2H5zM5 8h2v2H5zM1 8h2v2H1z" />
      </svg>
    </div>
  </div>
);

export default function App() {
  return (
    <div className="relative flex h-screen flex-col overflow-hidden bg-white font-['Noto_Sans','Noto_Sans_CJK_SC',sans-serif] text-base text-black">
      <header className="flex h-[29px] shrink-0 items-center border-b border-[#f4f4f4] pl-0.5 text-[#999]">
        <Logo />
        <span className="ml-[5px] flex-1 whitespace-nowrap text-base">EPLAN Electric P8 2.9 SP1 - D:\PLC_File\eplanProgram\learnEplan - =work1+Power/1 (learnEplan)</span>
        <svg width="11" height="11" viewBox="0 0 11 11" className="mr-12" stroke="#999"><path d="M0 5.500h11" /></svg>
        <svg width="12" height="12" viewBox="0 0 12 12" className="mr-12" fill="none" stroke="#999"><path d="M.500 3.500h8v8h-8zM3.500 3V.500h8v8H9" /></svg>
        <svg width="12" height="12" viewBox="0 0 12 12" className="mr-[26px]" stroke="#999"><path d="M.500.500l11 11M11.500.500l-11 11" /></svg>
      </header>
      <nav className="flex h-[29px] shrink-0 items-center gap-3.5 border-b border-[#a8a8a8]">
        <div className="-mr-[3px] ml-1 h-[22px] border-l-2 border-dotted border-[#bdbdbd]" />
        {menus.map((m) => (
          <button key={m} type="button" className="whitespace-nowrap">{m}</button>
        ))}
      </nav>
      <Bars groups={rowOne} />
      <Bars groups={rowTwo} />
      <div className="flex min-h-0 flex-1 bg-[#f7f7f7]">
        <aside className="flex w-[241px] shrink-0 flex-col gap-[3px] bg-white pt-px">
          <PagesPanel />
          <section className="flex min-h-0 flex-1 flex-col">
            <PanelHeader title="图形预览" />
            <div className="mt-0.5 flex-1 border-2 border-[#8a8a8a] border-b-[#d0d0d0] border-r-[#d0d0d0] bg-[#f0f0f0]" />
          </section>
        </aside>
        <div className="w-1 bg-white" />
        <main className="flex min-w-0 flex-1 flex-col border-l border-t border-[#a0a0a0]">
          <div className="flex h-[29px] shrink-0 items-end">
            <div className="flex h-7 items-center">
              <svg width="34" height="28" viewBox="0 0 34 28" aria-hidden="true">
                <path d="M2 28L27 3c2-2 4-2.500 7-2.500V28z" fill="#b8cfeb" />
                <path d="M2 28L27 3c2-2 4-2.500 7-2.500" fill="none" stroke="#9aa4b0" />
              </svg>
              <div className="flex h-full items-center border-t border-[#9aa4b0] bg-[#b8cfeb] pl-0.5 pr-[3px]">
                <span className="w-[224px] whitespace-nowrap text-[15px] font-semibold">=work1+Power/1 (learnEplan)</span>
                <button type="button" aria-label="关闭" className="flex size-[21px] items-center justify-center bg-[#c75050]">
                  <svg width="6" height="6" viewBox="0 0 6 6"><path d="M1 1l4 4M5 1L1 5" stroke="#fff" strokeWidth="1.500" /></svg>
                </button>
              </div>
            </div>
            <div className="flex h-7 flex-1 items-center justify-end border-b border-l border-[#9aa4b0] pr-1">
              <svg width="12" height="7" viewBox="0 0 12 7"><path d="M0 0h12L6 7z" fill="#000" /></svg>
            </div>
          </div>
          <div className="min-h-0 flex-1 border-2 border-[#b8cfeb]">
            <div className="size-full border-b-2 border-l-2 border-t border-[#555] border-b-[#eee] bg-black">
              <Schematic />
            </div>
          </div>
        </main>
        <SideBars />
      </div>
      <footer className="flex h-[27px] shrink-0 border-t-2 border-[#b9b9b9] bg-[#f0f0f0] text-sm leading-6">
        <span className="w-20 pl-1.5">RX: 35.00</span>
        <span className="flex-1 pl-1.5">RY: 25.16</span>
        <span className="w-[485px] border-l border-[#d4d4d4]" />
        <span className="w-[219px] border-l border-[#d4d4d4] pl-1 text-[#6b6b6b]">打开: 4.00 mm</span>
        <span className="w-[126px] border-l border-[#d4d4d4] pl-1 text-[#6b6b6b]">zh_CN</span>
        <span className="w-[166px] border-l border-[#d4d4d4] pl-1">#</span>
      </footer>
      <svg width="22" height="20" viewBox="0 0 22 20" className="absolute bottom-0.5 right-[58px]" aria-hidden="true">
        <path d="M11 0v10M5 7l6 6 6-6" fill="none" stroke={GREEN} strokeWidth="4" />
        <path d="M1 13v6h20v-6" fill="none" stroke={GREEN} strokeWidth="2.500" />
      </svg>
      <span className="absolute bottom-1 right-[14px] text-[15px] leading-6 text-[#9a9a9a]">CSDN @花崎泪</span>
      <Dialog />
    </div>
  );
}
